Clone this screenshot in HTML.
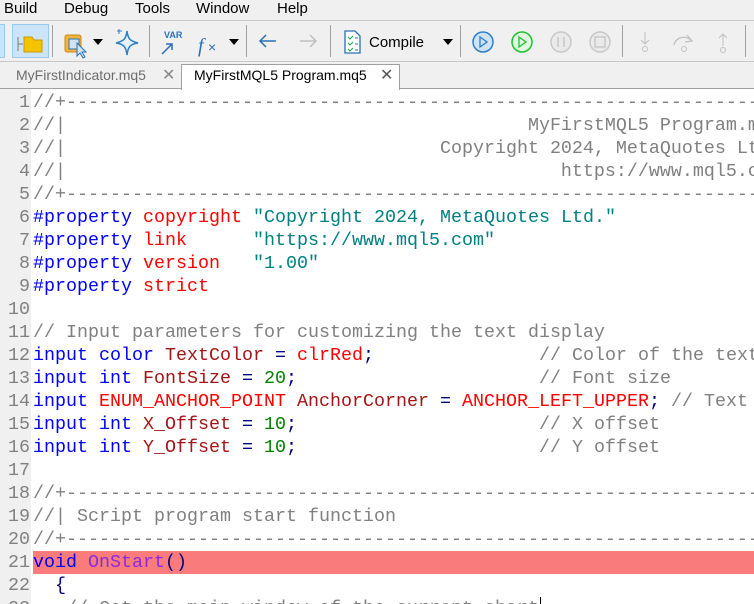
<!DOCTYPE html>
<html><head><meta charset="utf-8"><style>
*{margin:0;padding:0;box-sizing:border-box}
html,body{width:754px;height:604px;overflow:hidden}
body{background:#fff;font-family:"Liberation Sans",sans-serif;position:relative}
.menu{position:absolute;left:0;top:0;width:754px;height:21px;background:#f0f0f0;border-bottom:1px solid #c8c8c8;font-size:15px;color:#000}
.menu span{position:absolute;top:0}
.tb{position:absolute;left:0;top:21px;width:754px;height:40px;background:#f0f0f0}
.sep{position:absolute;top:4px;width:1px;height:32px;background:#a0a0a0}
.tabs{position:absolute;left:0;top:61px;width:754px;height:28px;background:#f0f0f0;border-top:1px solid #c8c8c8;border-bottom:1px solid #a0a0a0}
.tab{position:absolute;font-size:14px;top:5px}
.gut{position:absolute;left:0;top:89px;width:31px;height:515px;background:#f0f0f0}
.code{position:absolute;left:0;top:91px;width:754px;height:513px;overflow:hidden;font-family:"Liberation Mono",monospace;font-size:18.33px;line-height:23px;color:#000}
.l{height:23px;position:relative;white-space:pre}
.ln{display:inline-block;width:33px;text-align:right;color:#808080;padding-right:3px}
.c{color:#808080}.k{color:#0000ff}.r{color:#ff0000}.s{color:#008080}.v{color:#a31515}.o{color:#000080}.n{color:#008000}.f{color:#8a2be2}
.hl{position:absolute;left:33px;top:0;width:721px;height:23px;background:#f97b7b}
</style></head><body>
<div class="menu"><span style="left:4px">Build</span><span style="left:64px">Debug</span><span style="left:135px">Tools</span><span style="left:196px">Window</span><span style="left:277px">Help</span></div>
<div class="tb">
<div style="position:absolute;left:0;top:3px;width:5px;height:34px;background:#cce4f7;border:1px solid #99c9ef;border-left:none"></div>
<div style="position:absolute;left:12px;top:3px;width:37px;height:34px;background:#cce4f7;border:1px solid #99c9ef"></div>
<svg style="position:absolute;left:0;top:0" width="754" height="40">
<path d="M18 16v14M18 23h5" stroke="#777" fill="none"/>
<path d="M24 16h8l2 3h8v12h-18z" fill="#f5c400" stroke="#c89a00"/>
<rect x="65" y="14" width="16" height="17" rx="2" fill="#f3b43a" stroke="#c8881a"/>
<rect x="69" y="18" width="10" height="10" fill="#cfe3f5" stroke="#2a6fb5"/>
<path d="M77 22l9 9-4 0 3 5-2 1-3-5-3 3z" fill="#cfe3f5" stroke="#2a6fb5"/>
<path d="M93 18h10l-5 6z" fill="#000"/>
<path d="M127 10c1 8 3 10 11 12-8 1-10 4-11 12-1-8-3-11-11-12 8-2 10-4 11-12z" fill="#e8f2fb" stroke="#2a7fc9" stroke-width="1.5"/>
<path d="M119 8v5M117 10h5" stroke="#2a7fc9"/>
<text x="164" y="17" font-size="9" font-weight="bold" fill="#2a6fb5" font-family="Liberation Sans">VAR</text>
<path d="M162 33l10-10M166 23h6v6" stroke="#2a6fb5" fill="none" stroke-width="1.5"/>
<text x="198" y="31" font-size="20" fill="#2a6fb5" font-family="Liberation Serif" font-style="italic">f</text>
<text x="208" y="31" font-size="14" fill="#2a6fb5" font-family="Liberation Sans">×</text>
<path d="M229 18h10l-5 6z" fill="#000"/>
<path d="M260 20h16M266 14l-6 6 6 6" stroke="#2a6fb5" fill="none" stroke-width="1.5"/>
<path d="M300 20h16M310 14l6 6-6 6" stroke="#c0c0c0" fill="none" stroke-width="1.5"/>
<path d="M345 10h10l5 5v17h-15z" fill="#fff" stroke="#2a6fb5" stroke-width="1.3"/>
<path d="M348 16l2 2 3-3M348 22l2 2 3-3M348 28l2 2 3-3" stroke="#20a040" fill="none"/>
<path d="M355 17h3M355 23h3M355 29h3" stroke="#2a6fb5"/>
<text x="369" y="26" font-size="15" font-family="Liberation Sans" fill="#000">Compile</text>
<path d="M443 18h10l-5 6z" fill="#000"/>
<circle cx="483" cy="21" r="10" fill="#cfe3f5" stroke="#2a7fc9" stroke-width="1.5"/>
<path d="M480 16v10l7-5z" fill="none" stroke="#2a7fc9" stroke-width="1.3"/>
<circle cx="522" cy="21" r="10" fill="#e0f8e0" stroke="#20c030" stroke-width="1.5"/>
<path d="M519 16v10l7-5z" fill="none" stroke="#20c030" stroke-width="1.3"/>
<circle cx="561" cy="21" r="10" fill="#eaeaea" stroke="#c8c8c8" stroke-width="1.5"/>
<path d="M558 16v10M564 16v10" stroke="#c8c8c8" stroke-width="1.5"/>
<circle cx="600" cy="21" r="10" fill="#eaeaea" stroke="#c8c8c8" stroke-width="1.5"/>
<rect x="595" y="16" width="10" height="10" fill="none" stroke="#c8c8c8" stroke-width="1.5"/>
<path d="M645 11v12M641 19l4 4 4-4" stroke="#c0c0c0" fill="none"/><circle cx="645" cy="28" r="2.5" fill="none" stroke="#c0c0c0"/>
<path d="M674 24a10 9 0 0 1 18-4M687 14l5 6-7 1" stroke="#c0c0c0" fill="none" stroke-width="1.3"/><circle cx="684" cy="28" r="2.5" fill="none" stroke="#c0c0c0"/>
<path d="M723 25v-12M719 17l4-4 4 4" stroke="#c0c0c0" fill="none"/><circle cx="723" cy="29" r="2.5" fill="none" stroke="#c0c0c0"/>
</svg>
<div class="sep" style="left:52px"></div><div class="sep" style="left:149px"></div><div class="sep" style="left:246px"></div><div class="sep" style="left:330px"></div><div class="sep" style="left:460px"></div><div class="sep" style="left:622px"></div><div class="sep" style="left:745px"></div>
</div>
<div class="tabs">
<div class="tab" style="left:16px;color:#6d6d6d">MyFirstIndicator.mq5</div>
<div class="tab" style="left:162px;color:#888;font-size:16px;top:3px">✕</div>
<div style="position:absolute;left:181px;top:2px;width:219px;height:26px;background:#fff;border:1px solid #a0a0a0;border-bottom:none"></div>
<div class="tab" style="left:194px;color:#000">MyFirstMQL5 Program.mq5</div>
<div class="tab" style="left:380px;color:#555;font-size:16px;top:3px">✕</div>
</div>
<div class="gut"></div>
<div class="code"><div class="l"><span class="ln">1</span><span class="c">//+------------------------------------------------------------------+</span></div><div class="l"><span class="ln">2</span><span class="c">//|                                          MyFirstMQL5 Program.mq5 |</span></div><div class="l"><span class="ln">3</span><span class="c">//|                                  Copyright 2024, MetaQuotes Ltd. |</span></div><div class="l"><span class="ln">4</span><span class="c">//|                                             https://www.mql5.com |</span></div><div class="l"><span class="ln">5</span><span class="c">//+------------------------------------------------------------------+</span></div><div class="l"><span class="ln">6</span><span class="k">#property</span> <span class="r">copyright</span> <span class="s">"Copyright 2024, MetaQuotes Ltd."</span></div><div class="l"><span class="ln">7</span><span class="k">#property</span> <span class="r">link</span>      <span class="s">"https://www.mql5.com"</span></div><div class="l"><span class="ln">8</span><span class="k">#property</span> <span class="r">version</span>   <span class="s">"1.00"</span></div><div class="l"><span class="ln">9</span><span class="k">#property</span> <span class="r">strict</span></div><div class="l"><span class="ln">10</span></div><div class="l"><span class="ln">11</span><span class="c">// Input parameters for customizing the text display</span></div><div class="l"><span class="ln">12</span><span class="k">input</span> <span class="k">color</span> <span class="v">TextColor</span> <span class="o">=</span> <span class="r">clrRed</span><span class="o">;</span>               <span class="c">// Color of the text</span></div><div class="l"><span class="ln">13</span><span class="k">input</span> <span class="k">int</span> <span class="v">FontSize</span> <span class="o">=</span> <span class="n">20</span><span class="o">;</span>                      <span class="c">// Font size</span></div><div class="l"><span class="ln">14</span><span class="k">input</span> <span class="r">ENUM_ANCHOR_POINT</span> <span class="v">AnchorCorner</span> <span class="o">=</span> <span class="r">ANCHOR_LEFT_UPPER</span><span class="o">;</span> <span class="c">// Text anchor</span></div><div class="l"><span class="ln">15</span><span class="k">input</span> <span class="k">int</span> <span class="v">X_Offset</span> <span class="o">=</span> <span class="n">10</span><span class="o">;</span>                      <span class="c">// X offset</span></div><div class="l"><span class="ln">16</span><span class="k">input</span> <span class="k">int</span> <span class="v">Y_Offset</span> <span class="o">=</span> <span class="n">10</span><span class="o">;</span>                      <span class="c">// Y offset</span></div><div class="l"><span class="ln">17</span></div><div class="l"><span class="ln">18</span><span class="c">//+------------------------------------------------------------------+</span></div><div class="l"><span class="ln">19</span><span class="c">//| Script program start function                                    |</span></div><div class="l"><span class="ln">20</span><span class="c">//+------------------------------------------------------------------+</span></div><div class="l"><div class="hl"></div><span class="ln" style="position:relative">21</span><span class="k" style="position:relative">void</span> <span class="f" style="position:relative">OnStart</span><span class="o" style="position:relative">()</span></div><div class="l"><span class="ln">22</span>  <span class="o">{</span></div><div class="l"><span class="ln">23</span>   <span class="c">// Get the main window of the current chart</span></div></div>
<div style="position:absolute;left:540px;top:597px;width:1px;height:7px;background:#000"></div>
</body></html>
